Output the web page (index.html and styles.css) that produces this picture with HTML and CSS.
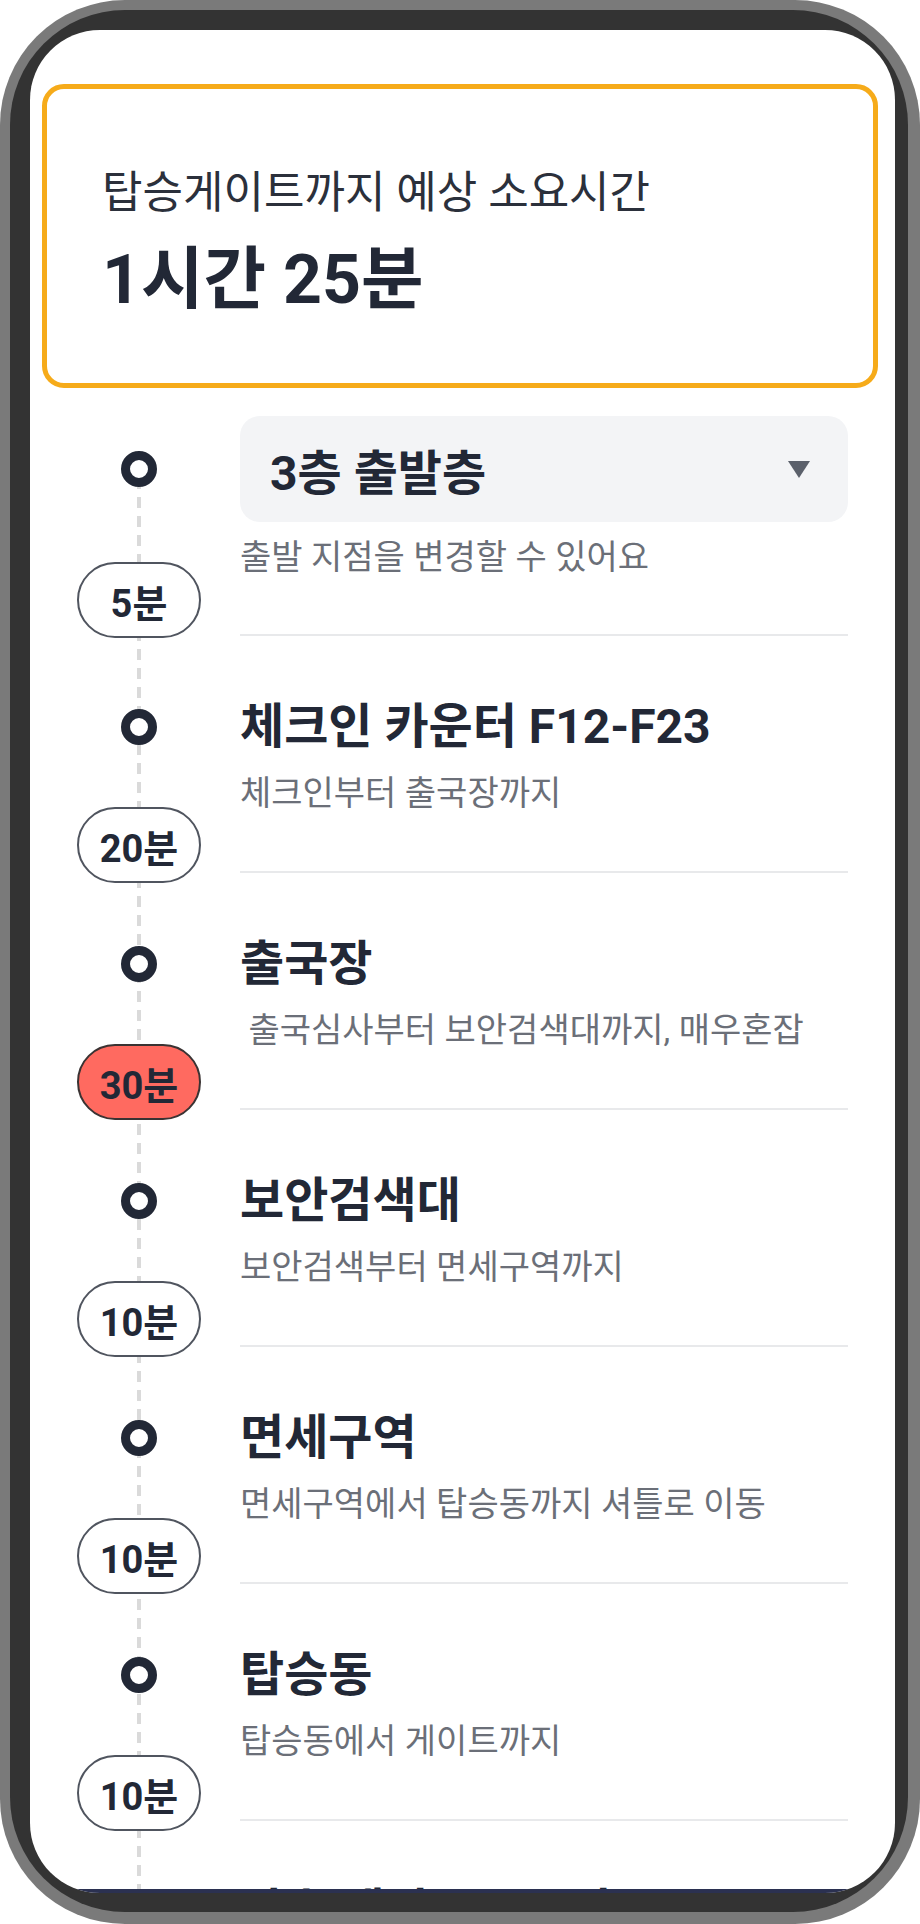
FILE: index.html
```html
<!DOCTYPE html>
<html lang="ko">
<head>
<meta charset="utf-8">
<title>예상 소요시간</title>
<link rel="stylesheet" href="styles.css">
</head>
<body>
<div class="phone">
  <div class="bezel">
    <div class="screen">
      <main class="content">
        <section class="summary">
          <p class="summary-label">탑승게이트까지 예상 소요시간</p>
          <p class="summary-value">1시간 25분</p>
        </section>
        <ol class="timeline">
          <li class="step step-first">
            <div class="rail"><span class="node"></span><span class="dur">5분</span></div>
            <div class="body">
              <div class="select"><span>3층 출발층</span><span class="caret"></span></div>
              <p class="desc">출발 지점을 변경할 수 있어요</p>
            </div>
          </li>
          <li class="step">
            <div class="rail"><span class="node"></span><span class="dur">20분</span></div>
            <div class="body">
              <h3 class="title">체크인 카운터 F12-F23</h3>
              <p class="desc">체크인부터 출국장까지</p>
            </div>
          </li>
          <li class="step">
            <div class="rail"><span class="node"></span><span class="dur dur-busy">30분</span></div>
            <div class="body">
              <h3 class="title">출국장</h3>
              <p class="desc">&nbsp;출국심사부터 보안검색대까지, 매우혼잡</p>
            </div>
          </li>
          <li class="step">
            <div class="rail"><span class="node"></span><span class="dur">10분</span></div>
            <div class="body">
              <h3 class="title">보안검색대</h3>
              <p class="desc">보안검색부터 면세구역까지</p>
            </div>
          </li>
          <li class="step">
            <div class="rail"><span class="node"></span><span class="dur">10분</span></div>
            <div class="body">
              <h3 class="title">면세구역</h3>
              <p class="desc">면세구역에서 탑승동까지 셔틀로 이동</p>
            </div>
          </li>
          <li class="step">
            <div class="rail"><span class="node"></span><span class="dur">10분</span></div>
            <div class="body">
              <h3 class="title">탑승동</h3>
              <p class="desc">탑승동에서 게이트까지</p>
            </div>
          </li>
          <li class="step">
            <div class="rail"><span class="node"></span></div>
            <div class="body">
              <h3 class="title">탑승 게이트 123번</h3>
              <p class="desc">게이트에서 탑승</p>
            </div>
          </li>
        </ol>
      </main>
      <div class="cta"></div>
    </div>
  </div>
</div>
</body>
</html>
```

FILE: styles.css
```css
* {
  box-sizing: border-box;
  margin: 0;
  padding: 0;
}

body {
  background: #ffffff;
  font-family: Roboto, "Noto Sans CJK KR", sans-serif;
  color: #222836;
}

.phone {
  width: 920px;
  height: 1924px;
  background: #7a7a7a;
  border-radius: 125px;
  padding: 10px 12px 12px 10px;
}

.bezel {
  height: 100%;
  background: #333333;
  border-radius: 115px;
  padding: 20px 13px 19px 20px;
}

.screen {
  height: 100%;
  background: #ffffff;
  border-radius: 70px;
  overflow: hidden;
  display: flex;
  flex-direction: column;
}

.content {
  flex: 1;
  min-height: 0;
  overflow: hidden;
  padding-top: 54px;
}

.cta {
  flex-shrink: 0;
  height: 4px;
  background: #2b3151;
}

.summary {
  margin: 0 17px 0 12px;
  height: 304px;
  border: 5px solid #f6ab1a;
  border-radius: 22px;
  padding: 79px 55px 0;
}

.summary-label {
  font-size: 44px;
  line-height: 50px;
  color: #2b303b;
}

.summary-value {
  margin-top: 22px;
  font-size: 68px;
  line-height: 80px;
  font-weight: 700;
}

.timeline {
  list-style: none;
  margin-top: 11px;
  padding: 0 47px;
  background: repeating-linear-gradient(to bottom, #dadada 0 11px, transparent 11px 19px) 107px 79px / 4px 100% no-repeat;
}

.step {
  display: grid;
  grid-template-columns: 124px 1fr;
  column-gap: 39px;
}

.rail {
  display: flex;
  flex-direction: column;
  align-items: center;
}

.node {
  width: 36px;
  height: 36px;
  margin-top: 73px;
  border: 9px solid #222836;
  border-radius: 50%;
  background: #ffffff;
}

.step-first .node {
  margin-top: 52px;
}

.dur {
  position: relative;
  margin-top: auto;
  margin-bottom: -10px;
  width: 124px;
  height: 76px;
  border: 2px solid #50555f;
  border-radius: 38px;
  background: #ffffff;
  display: flex;
  align-items: center;
  justify-content: center;
  font-size: 38px;
  font-weight: 700;
}

.step-first .dur {
  margin-bottom: -2px;
}

.dur-busy {
  background: #ff6a60;
  border-color: #3a3333;
}

.body {
  padding: 60px 0 56px;
  border-bottom: 2px solid #e8e9eb;
}

.step-first .body {
  padding-top: 17px;
  padding-bottom: 55px;
}

.title {
  font-size: 48px;
  line-height: 62px;
  font-weight: 700;
}

.desc {
  margin-top: 13px;
  font-size: 34px;
  line-height: 44px;
  color: #6b6f78;
}

.select {
  height: 106px;
  background: #f3f4f6;
  border-radius: 20px;
  display: flex;
  align-items: center;
  justify-content: space-between;
  padding: 0 38px 0 30px;
  font-size: 48px;
  font-weight: 700;
}

.caret {
  width: 0;
  height: 0;
  border-left: 11.5px solid transparent;
  border-right: 11.5px solid transparent;
  border-top: 17px solid #5b606b;
}
```
